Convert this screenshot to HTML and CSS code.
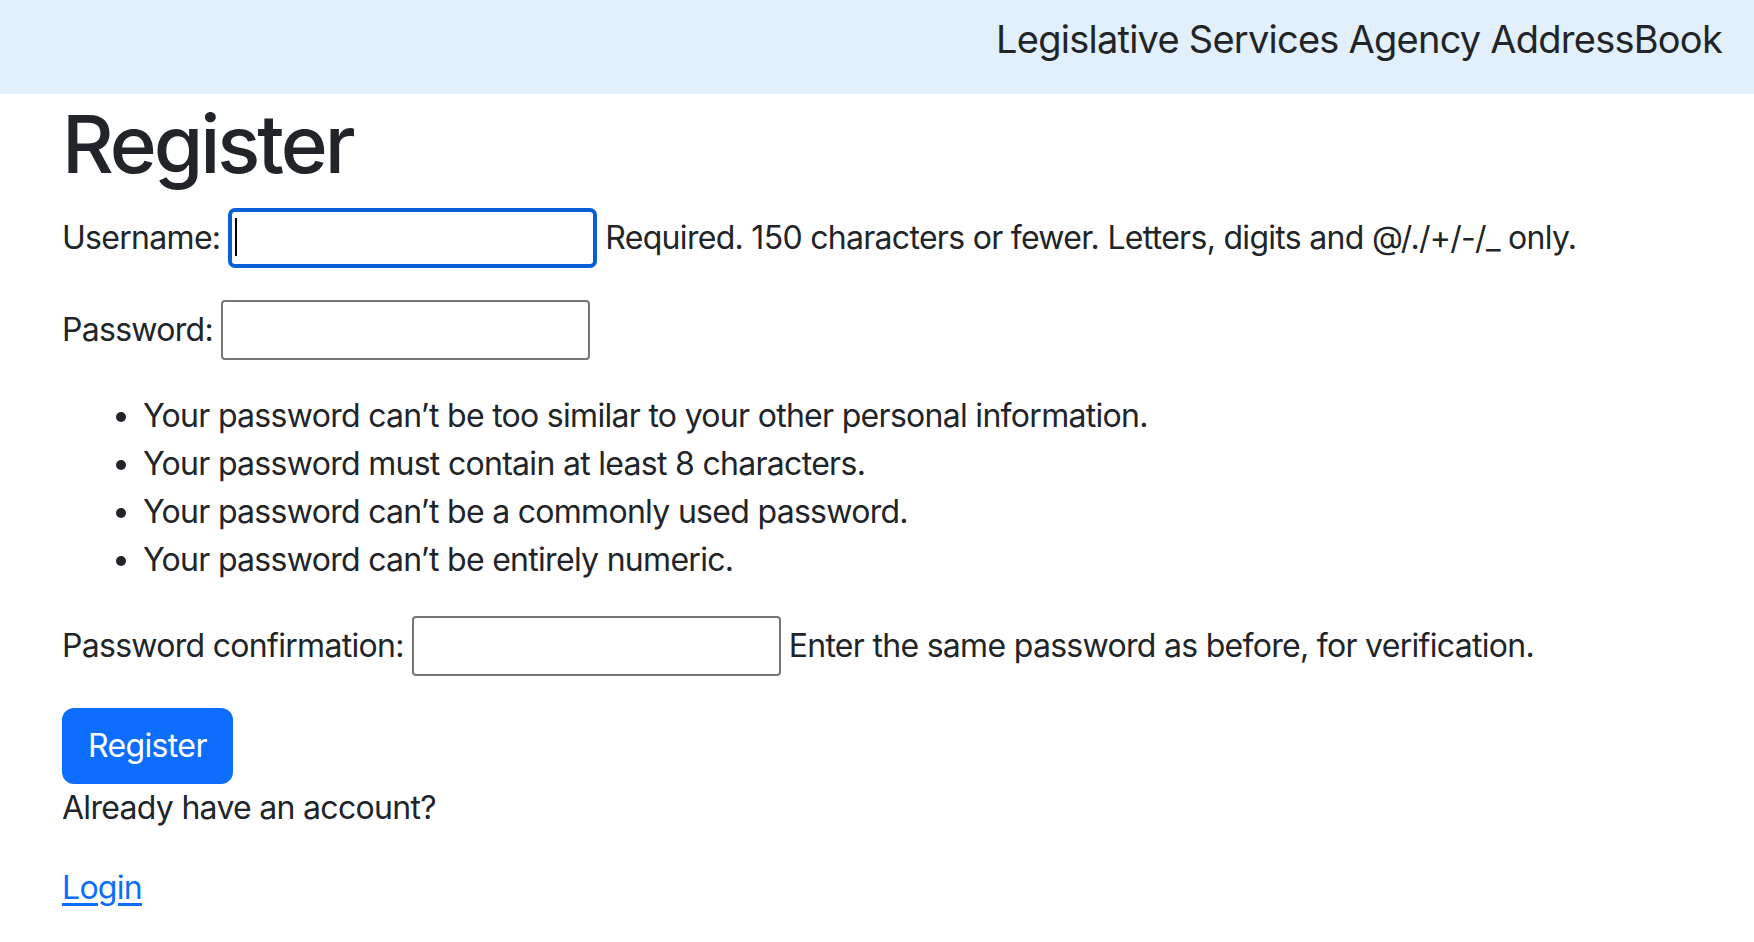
FILE: index.html
```
<!DOCTYPE html>
<html lang="en">
<head>
<meta charset="utf-8">
<title>Register</title>
<link rel="stylesheet" href="styles.css">
</head>
<body>
<header class="topbar">
  <span class="brand">Legislative Services Agency AddressBook</span>
</header>
<main class="page">
  <h1 class="title">Register</h1>
  <form class="form">
    <div class="row">
      <label class="label" for="id_username">Username:</label>
      <span class="field-wrap">
        <input class="field field-focused" type="text" id="id_username" name="username">
        <span class="caret"></span>
      </span>
      <span class="help">Required. 150 characters or fewer. Letters, digits and @/./+/-/_ only.</span>
    </div>
    <div class="row">
      <label class="label" for="id_password1">Password:</label>
      <input class="field" type="password" id="id_password1" name="password1">
    </div>
    <ul class="rules">
      <li>Your password can’t be too similar to your other personal information.</li>
      <li>Your password must contain at least 8 characters.</li>
      <li>Your password can’t be a commonly used password.</li>
      <li>Your password can’t be entirely numeric.</li>
    </ul>
    <div class="row">
      <label class="label" for="id_password2">Password confirmation:</label>
      <input class="field" type="password" id="id_password2" name="password2">
      <span class="help">Enter the same password as before, for verification.</span>
    </div>
    <button class="btn" type="button">Register</button>
  </form>
  <p class="note">Already have an account?</p>
  <p class="note"><a class="link" href="#">Login</a></p>
</main>
</body>
</html>
```
FILE: styles.css
```
html, body {
  margin: 0;
  padding: 0;
  background: #ffffff;
}

body {
  font-family: Inter, "Noto Sans", sans-serif;
  font-size: 32px;
  line-height: 48px;
  letter-spacing: -0.022em;
  color: #212529;
}

.topbar {
  height: 94px;
  box-sizing: border-box;
  background: #e2f0fc;
  display: flex;
  justify-content: flex-end;
  align-items: flex-start;
  padding: 9px 32px 0 0;
}

.brand {
  font-size: 38px;
  line-height: 60px;
  letter-spacing: -0.02em;
  color: #212529;
}

.page {
  padding: 0 62px;
}

.title {
  margin: 0 0 16px;
  padding-top: 2px;
  font-size: 80px;
  line-height: 96px;
  font-weight: 500;
  letter-spacing: -0.038em;
  color: #212529;
}

.form {
  margin: 0;
}

.row {
  display: flex;
  align-items: center;
  gap: 8px;
  height: 60px;
  margin-bottom: 32px;
  white-space: nowrap;
}

.label {
  display: block;
}

.field-wrap {
  position: relative;
  display: block;
}

.field {
  display: block;
  box-sizing: border-box;
  width: 369px;
  height: 60px;
  margin: 0;
  padding: 0 8px;
  border: 2px solid #767676;
  border-radius: 4px;
  background: #ffffff;
  font: inherit;
  outline: none;
}

.field-focused {
  border: 4px solid #0b5fd6;
  border-radius: 7px;
}

.caret {
  position: absolute;
  left: 7px;
  top: 10px;
  width: 2px;
  height: 38px;
  background: #000000;
}

.rules {
  margin: 0 0 32px;
  padding-left: 81px;
}

.rules li {
  line-height: 48px;
}

.btn {
  display: block;
  box-sizing: border-box;
  height: 76px;
  margin: 0;
  padding: 0 24px;
  border: 2px solid #0d6efd;
  border-radius: 12px;
  background: #0d6efd;
  color: #ffffff;
  font: inherit;
  line-height: 48px;
  letter-spacing: -0.02em;
}

.note {
  margin: 0 0 32px;
}

.link {
  color: #0d6efd;
  text-decoration: underline;
  text-underline-offset: 4px;
}
```
